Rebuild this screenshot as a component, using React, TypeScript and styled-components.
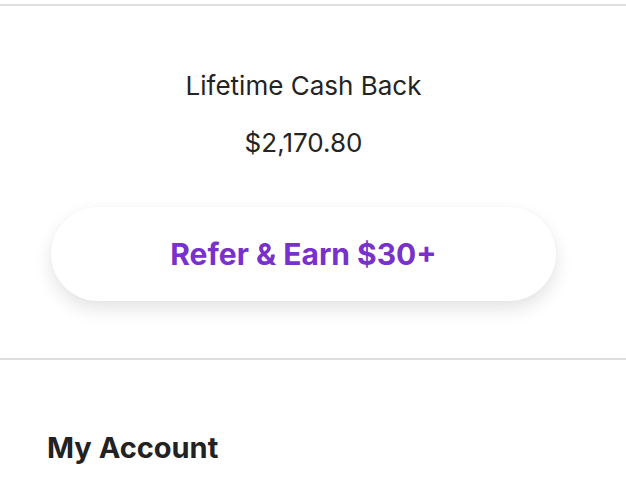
import styled, { createGlobalStyle } from 'styled-components'

const GlobalStyle = createGlobalStyle`
  body {
    margin: 0;
    background: #ffffff;
    font-family: Inter, "Noto Sans", sans-serif;
    color: #222222;
  }
`

const StyledPage = styled.main`
  padding-top: 4px;
  width: 626px;
`

const StyledSummary = styled.section`
  display: flex;
  flex-direction: column;
  align-items: center;
  border-top: 2px solid #dedede;
  border-bottom: 2px solid #dedede;
  padding: 64px 70px 57px 51px;
`

const StyledLabel = styled.div`
  font-size: 26px;
  line-height: 32px;
  color: #242424;
`

const StyledAmount = styled.div`
  font-size: 26px;
  line-height: 32px;
  margin-top: 25px;
  color: #242424;
`

const StyledReferButton = styled.button`
  margin-top: 48px;
  width: 100%;
  height: 94px;
  border: none;
  border-radius: 47px;
  background: #ffffff;
  box-shadow: 0 8px 18px rgba(0, 0, 0, 0.11), 0 0 3px rgba(0, 0, 0, 0.03);
  font-family: inherit;
  font-size: 30px;
  font-weight: 700;
  color: #7831cb;
  cursor: pointer;
`

const StyledAccount = styled.section`
  padding: 70px 47px 0 47px;
`

const StyledHeading = styled.h2`
  margin: 0;
  font-size: 29px;
  line-height: 36px;
  font-weight: 700;
  color: #222222;
`

export default function App() {
  return (
    <StyledPage>
      <GlobalStyle />
      <StyledSummary>
        <StyledLabel>Lifetime Cash Back</StyledLabel>
        <StyledAmount>$2,170.80</StyledAmount>
        <StyledReferButton type="button">Refer &amp; Earn $30+</StyledReferButton>
      </StyledSummary>
      <StyledAccount>
        <StyledHeading>My Account</StyledHeading>
      </StyledAccount>
    </StyledPage>
  )
}
